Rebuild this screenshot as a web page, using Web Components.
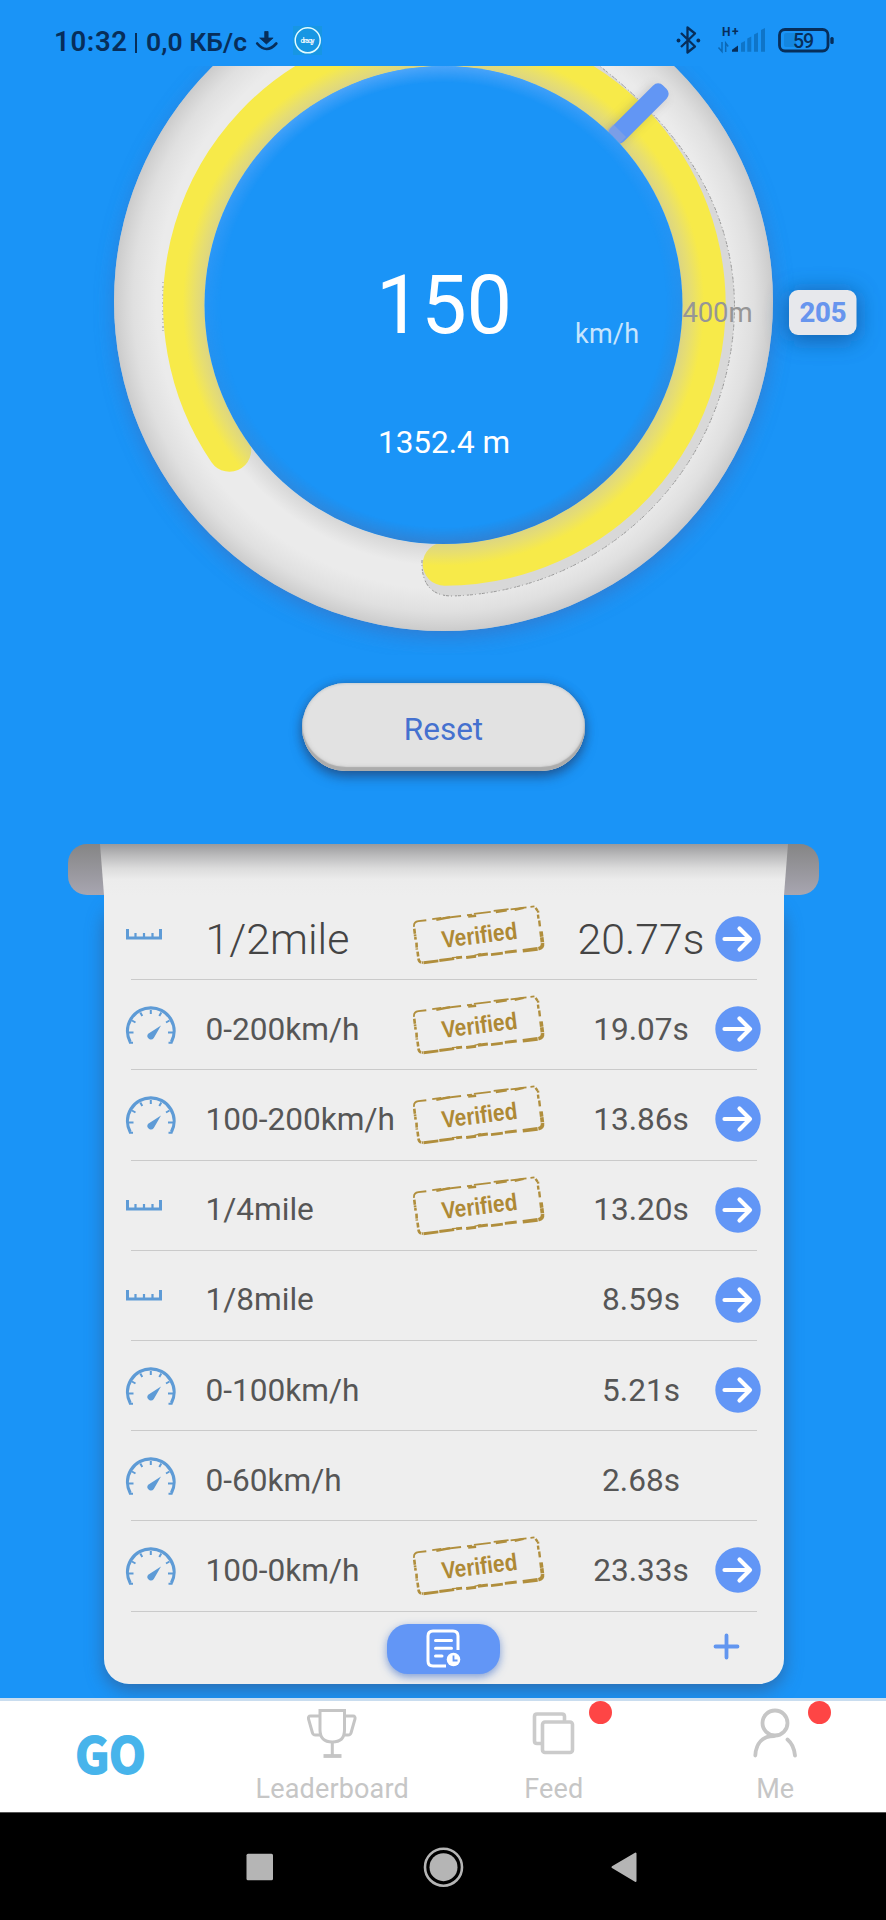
<!DOCTYPE html>
<html lang="en">
<head>
<meta charset="utf-8">
<title>Run results</title>
<style>
body{margin:0;background:#1a94f7;font-family:Roboto,"Liberation Sans",sans-serif}
</style>
</head>
<body>
<drag-app></drag-app>
<script>
const define = (name, html) => customElements.define(name, class extends HTMLElement {
  constructor(){
    super();
    const t = document.createElement('template');
    t.innerHTML = typeof html === 'function' ? html(this) : html;
    this.attachShadow({mode:'open'}).appendChild(t.content.cloneNode(true));
  }
});

define('status-bar', `
<style>
:host{display:flex;height:66px;box-sizing:border-box;background:#1a94f7;position:relative;z-index:2;color:#0a2f58}
svg{display:block}
</style>
<svg width="886" height="66" viewBox="0 0 886 66" font-family="Roboto,sans-serif" fill="#072e5a">
  <text x="54" y="50.5" font-size="27.5" font-weight="600" textLength="73">10:32</text>
  <rect x="135" y="33" width="2" height="20"/>
  <text x="146" y="50.5" font-size="26.5" font-weight="600" textLength="101">0,0 КБ/с</text>
  <path d="M264.7 31.5h3.4v6.5h5l-6.7 6-6.7-6h5z" stroke="#072e5a" stroke-width=".8" stroke-linejoin="round"/>
  <path d="M257.200 43.500Q266.500 54.500 276.300 43.500" fill="none" stroke="#072e5a" stroke-width="2.700" stroke-linecap="round"/>
  <rect x="293" y="26" width="29" height="29" fill="#1796e3"/>
  <circle cx="307.700" cy="40.300" r="12.500" fill="none" stroke="#e3fbff" stroke-width="1.500"/>
  <text x="300.500" y="42.500" font-size="7" font-weight="500" fill="#fff" textLength="14">draqy</text>
  <path d="M681 33l14 13.500-7.500 6v-25l7.500 6-14 13.500" fill="none" stroke="#072e5a" stroke-width="2.300" stroke-linejoin="round"/>
  <circle cx="678.500" cy="40.500" r="1.900"/><circle cx="698.300" cy="40.500" r="1.900"/>
  <text x="722" y="36" font-size="12" font-weight="700" textLength="16.500">H+</text>
  <path d="M722 42v9.500l-3.500-4M725.700 52v-9l2.500 3.500" fill="none" stroke="#0c68b5" stroke-width="1.500"/>
  <path d="M732 51.700v-2l6-4.200v6.200z"/>
  <g fill="#0f75c8"><path d="M741 43l4-2v10.700h-4zM747.300 38.500l4-2v15.200h-4zM754 34.500l4-2v19.200h-4zM761 30l4-2v23.700h-4z"/></g>
  <rect x="784" y="33" width="12" height="14" rx="2" fill="#1486df"/>
  <rect x="779.500" y="29.500" width="48.500" height="21.500" rx="5.500" fill="none" stroke="#072e5a" stroke-width="2.800"/>
  <rect x="830.300" y="37" width="3.400" height="7" rx="1.500"/>
  <text x="793" y="47.500" font-size="19.500" font-weight="500" textLength="21">59</text>
</svg>`);

define('speed-gauge', `
<style>:host{display:block;height:589px}svg{display:block}</style>
<svg width="886" height="589" viewBox="0 66 886 589" font-family="Roboto,sans-serif">
  <defs>
    <radialGradient id="rim" gradientUnits="userSpaceOnUse" cx="443.500" cy="301.500" r="330">
      <stop offset=".87" stop-color="#bbb" stop-opacity="0"/><stop offset=".94" stop-color="#b8b8b8" stop-opacity=".22"/><stop offset="1" stop-color="#b0b0b0" stop-opacity=".55"/>
    </radialGradient>
    <radialGradient id="lip" gradientUnits="userSpaceOnUse" cx="443.500" cy="305" r="330">
      <stop offset=".724" stop-color="#bfbfbf" stop-opacity=".48"/><stop offset=".75" stop-color="#c4c4c4" stop-opacity=".32"/><stop offset=".79" stop-color="#c8c8c8" stop-opacity="0"/>
    </radialGradient>
    <radialGradient id="hole" gradientUnits="userSpaceOnUse" cx="443.500" cy="305" r="239">
      <stop offset=".93" stop-color="#fff" stop-opacity="0"/><stop offset="1" stop-color="#fff" stop-opacity=".7"/>
    </radialGradient>
    <linearGradient id="tone" x1=".4" y1="0" x2=".6" y2="1">
      <stop offset="0" stop-color="#64adfb"/><stop offset=".4" stop-color="#4098f4" stop-opacity=".4"/><stop offset=".6" stop-color="#4b83c7" stop-opacity=".3"/><stop offset="1" stop-color="#3879c4"/>
    </linearGradient>
    <mask id="edge"><circle cx="443.500" cy="305" r="239" fill="url(#hole)"/></mask>
    <filter id="soft" x="-20%" y="-20%" width="140%" height="140%"><feGaussianBlur stdDeviation="11"/></filter>
    <filter id="thin" filterUnits="userSpaceOnUse" x="560" y="60" width="326" height="330"><feGaussianBlur stdDeviation="5"/></filter>
    <filter id="wide" filterUnits="userSpaceOnUse" x="740" y="240" width="146" height="160"><feGaussianBlur stdDeviation="11"/></filter>
    <clipPath id="ring"><path clip-rule="evenodd" d="M114 301.500a329.500 329.500 0 1 0 659 0a329.500 329.500 0 1 0-659 0M204.500 305a239 239 0 1 0 478 0a239 239 0 1 0-478 0"/></clipPath>
  </defs>
  <circle cx="444" cy="308" r="327" fill="#3c70bd" opacity=".75" filter="url(#soft)"/>
  <circle cx="443.500" cy="301.500" r="329.500" fill="#ebebeb"/>
  <circle cx="443.500" cy="301.500" r="329.500" fill="url(#rim)"/>
  <g clip-path="url(#ring)">
    <path d="M422 560C421 582 430 596 452 596A291 291 0 0 0 734.500 305Q733 168 597 64L560 64L450 560Z" fill="#d8d8d8"/>
    <path d="M422 560C421 582 430 596 452 596A291 291 0 0 0 734.500 305Q733 168 597 64" fill="none" stroke="#8f8f8f" stroke-width=".9" stroke-dasharray="3 2 1 3 2 1"/>
    <path d="M163 282v50" stroke="#999" stroke-width="1" stroke-dasharray="1 3 2 2"/>
    <path d="M444.500 564A259.500 259.500 0 1 0 229.500 450" fill="none" stroke="#f7ea49" stroke-width="43.500" stroke-linecap="round"/>
    <circle cx="443.500" cy="305" r="285" fill="url(#lip)"/>
    <path d="M606 144L660 91" stroke="#777" stroke-width="20" opacity=".3" filter="url(#thin)"/>
    <rect x="-33" y="-9.500" width="74.500" height="19" rx="7" fill="#6296f4" transform="translate(635.500 116.500)rotate(-45)"/>
    <path d="M606 131L619 144L626 137L613 124Z" fill="#9aa9d6" opacity=".45"/>
  </g>
  <circle cx="443.500" cy="305" r="239" fill="#1a94f7"/>
  <circle cx="443.500" cy="305" r="239" fill="url(#tone)" mask="url(#edge)"/>
  <text x="376" y="332.500" font-size="81" fill="#fff" textLength="136">150</text>
  <text x="575" y="342.500" font-size="27" fill="#c7e5fd" textLength="64">km/h</text>
  <text x="378" y="453" font-size="31.500" fill="#fff" textLength="132">1352.4 m</text>
  <text x="682.500" y="322" font-size="27.500" fill="#969696" textLength="70">400m</text>
  <rect x="787" y="291" width="71" height="50" rx="10" fill="#174f91" opacity=".7" filter="url(#wide)"/>
  <rect x="789" y="290" width="67.500" height="45" rx="9" fill="#e7e8ec"/>
  <text x="799.500" y="322" font-size="27.500" font-weight="800" fill="#6795ee" textLength="47">205</text>
</svg>`);

define('reset-button', `
<style>
:host{display:flex;align-items:center;justify-content:center;width:283px;height:88px;box-sizing:border-box;padding-top:4px;border-radius:44px;background:#e2e2e2;color:#4571cf;font-size:31.5px;
box-shadow:inset 0 -4px 1px #acacac,inset 0 -3px 5px #bbb,inset 0 1px 2px #c9d2d8,0 6px 12px rgba(32,66,115,.65),0 0 10px rgba(42,84,140,.45)}
</style><slot></slot>`);

const icons = {
  ruler:`<svg width="52" height="44" viewBox="0 0 52 44"><path d="M2.500 12v9h33v-9" fill="none" stroke="#5e9bd6" stroke-width="3"/><path d="M10.500 16v4M19 16v4M27.500 16v4" stroke="#5e9bd6" stroke-width="2.200"/></svg>`,
  meter:`<svg width="52" height="44" viewBox="0 0 52 44" fill="none" stroke="#5e9bd6"><path d="M5.200 35.500A23.300 23.300 0 1 1 46.400 35.500" stroke-width="3.200" transform="translate(0 -.5)"/><path d="M4 35.700h4M43.500 35.700h4" stroke-width="2"/><path d="M25.800 3v4M15.300 5.500l2 3.500M36.300 5.500l-2 3.500M7 13.500l3.500 2M44.500 13.500l-3.500 2M3 25.500h5.500M43 25.500h5.500" stroke-width="2"/><path d="M36 18.500L23.200 26.700A3.400 3.400 0 1 0 28.800 31Z" fill="#5e9bd6" stroke="none"/></svg>`
};

define('verified-stamp', `
<style>:host{display:block;width:134px;height:64px}svg{display:block}</style>
<svg width="134" height="64" viewBox="0 0 134 64">
 <g transform="translate(66.500 32) rotate(-7)" fill="none" stroke="#b08e3c">
  <path d="M-63-16q0-5 5-5h8M-44-21.500h9M-33-21h18M-9-21h5M-2-21.500h17M18-22h15M35-21.500h16M55-21.500h4" stroke-width="1.800"/>
  <path d="M-40-20.300l14-.9M-8-19.600l8 .2M20-20.700l11-.3M39-20.600l9-.8" stroke-width="2.400"/>
  <path d="M-63-14v11M-62.500 0l-.5 7M-62.500 9v5M-62.500 16q0 4.500 4 4.500" stroke-width="2.600" stroke-dasharray="5 .7 2 .6"/>
  <path d="M-58 20.800h15M-42 20.500h15M-25 20h6M-15 20.800h10M-3 20h10M10 21h12M24 20.500h12" stroke-width="2.900"/>
  <path d="M-29 19.200l8 .5M-7 20l7-1.300" stroke-width="1.300"/>
  <path d="M42 21h15q5.500 0 5.500-5v-12" stroke-width="3.600" stroke-dasharray="15 .6 8 .7 5 .6"/>
  <path d="M62-1v-6M61.500-9v-4M62-15v-2M60-20l1.500 3" stroke-width="2.400"/>
 </g>
 <text transform="translate(66 32) rotate(-7)" x="-36.500" y="8.500" font-family="Liberation Sans,Arial,sans-serif" font-weight="700" font-size="24" fill="#ae8935" textLength="76" lengthAdjust="spacingAndGlyphs">Verified</text>
</svg>`);

define('result-row', el => `
<style>
:host{display:grid;grid-template-columns:80.5px 204.5px 134px 95px 74px;height:90.2px;box-sizing:border-box;padding:8px 0 0 21px;align-items:center;position:relative;color:#565656;font-size:31.6px;white-space:nowrap}
:host::after{content:"";position:absolute;left:27px;width:626px;bottom:0;height:1px;background:#cacaca}
:host([lead]){font-size:42.8px;font-weight:300;color:#444}
.time{width:200px;margin-left:-3px;text-align:center}
.stamp{margin:-8px 0 0 1.5px}
.go{margin-left:76px}
svg{display:block;overflow:visible}
</style>
<div>${icons[el.getAttribute('icon')]}</div>
<div><slot></slot></div>
<div class="stamp">${el.hasAttribute('verified') ? '<verified-stamp></verified-stamp>' : ''}</div>
<div class="time">${el.getAttribute('time')}</div>
<div class="go">${el.hasAttribute('open') ? '<svg width="46" height="46" viewBox="0 0 46 46"><circle cx="23" cy="23" r="22.700" fill="#6296f6"/><path d="M9.500 23h25M24.500 12.500L35 23 24.500 33.500" fill="none" stroke="#fff" stroke-width="4.200" stroke-linecap="round" stroke-linejoin="round"/></svg>' : ''}</div>
`);

define('result-sheet', `
<style>
:host{display:grid;width:751px;height:840px;grid-template-rows:840px}
.roll,.paper,.cast{grid-area:1/1}
.roll{height:51px;border-radius:19px;background:linear-gradient(#858585,#a8a6b1)}
.paper{position:relative;width:680px;margin-left:36px;box-sizing:border-box;padding-top:46px;background:linear-gradient(#eee,#eee) 0 51px no-repeat;border-radius:0 0 25px 25px}
.shade{position:absolute;left:-4px;top:0;width:688px;height:51px;background:linear-gradient(#9a9a9c,#bdbdbe 24%,#dcdcdc 48%,#ececec 70%,#eee);clip-path:polygon(0 0,100% 0,684px 100%,4px 100%)}
.cast{align-self:end;margin-left:36px;width:680px;height:785px;border-radius:25px;box-shadow:0 6px 17px rgba(53,88,135,.65)}
.foot{display:grid;grid-template-columns:1fr 1fr 1fr;height:72px;align-items:center}
.history{grid-column:2;justify-self:center;display:grid;place-items:center;width:113px;height:50px;margin-top:3px;border-radius:21px;background:#6296f6;box-shadow:0 3px 9px rgba(79,122,205,.7)}
.add{justify-self:end;margin:-2px 44px 0 0}
svg{display:block}
</style>
<div class="cast"></div><div class="roll"></div>
<div class="paper"><div class="shade"></div><slot></slot>
 <div class="foot"><div class="history"><svg width="36" height="40" viewBox="0 0 36 40" fill="none" stroke="#fff"><path d="M32 21V7q0-5-5-5H7Q2 2 2 7v25q0 5 5 5h13" stroke-width="3"/><path d="M9.500 11.500h16M9.500 19.300h16M9.500 27h6.500" stroke-width="3" stroke-linecap="round"/><circle cx="27.500" cy="30.500" r="6.800" fill="#fff" stroke="none"/><path d="M27.500 26.500v5h4" stroke="#6296f6" stroke-width="1.800"/></svg></div>
 <svg class="add" width="27" height="27" viewBox="0 0 27 27"><path d="M13.500 2.500v22M2.500 13.500h22" stroke="#6296ef" stroke-width="3.800" stroke-linecap="round"/></svg></div>
</div>`);

define('tab-item', `
<style>
:host{display:flex;flex-direction:column;align-items:center;position:relative;box-sizing:border-box;height:111px;padding-top:5px;color:#c6c6c6;font-size:27px}
:host([badge])::after{content:"";position:absolute;left:calc(50% + var(--badge-shift,35.3px));top:0;width:23px;height:23px;border-radius:50%;background:#fe4545}
.l{line-height:32px;margin-top:13px;letter-spacing:.15px}
</style><slot name="icon"></slot><div class="l"><slot></slot></div>`);

define('tab-bar', `
<style>
:host{display:grid;grid-template-columns:repeat(4,221.5px);height:115px;box-sizing:border-box;background:#fff;border-top:3px solid #c9ddef;position:relative;border-bottom:1px solid #555}
svg{display:block}
.me{--badge-shift:33px}
</style>
<svg width="221" height="110" viewBox="0 0 221 110"><text x="75.500" y="72.300" font-family="Noto Sans CJK SC,Noto Sans,sans-serif" font-weight="700" font-size="48.500" fill="#47b4eb" stroke="#47b4eb" stroke-width="2" textLength="70" lengthAdjust="spacingAndGlyphs">GO</text></svg>
<tab-item><svg slot="icon" width="52" height="54" viewBox="0 0 52 54" fill="none" stroke="#c5c5c5" stroke-width="3"><path d="M14 4.500h24.500V24q0 12-12.200 12T14 24z"/><path d="M14 10H4.500Q2 10 2.500 13l4 14q.5 2 3 2H14M38.500 10h8.500q2.500 0 2 3l-4 14q-.5 2-3 2h-3.500M26.300 36v14"/><path d="M17.500 50h18" stroke-width="3.800"/></svg>Leaderboard</tab-item>
<tab-item badge><svg slot="icon" width="52" height="54" viewBox="0 0 52 54" fill="none" stroke="#cbcbcb" stroke-width="3.600"><path d="M13 37.500H9Q6.500 37.500 6.500 35V10.500Q6.500 8 9 8h25q2.500 0 2.500 2.500V15"/><rect x="14.500" y="16" width="30" height="30.500" rx="2.500"/></svg>Feed</tab-item>
<tab-item badge class="me"><svg slot="icon" width="52" height="54" viewBox="0 0 52 54" fill="none" stroke="#c6c6c6" stroke-width="3.800" stroke-linecap="round"><circle cx="26" cy="17" r="12.500"/><path d="M6.300 49.500C7 37 14 30 25 30M38.500 33.500Q45 39 46 49.500"/></svg>Me</tab-item>`);

define('nav-bar', `
<style>:host{display:flex;justify-content:space-between;box-sizing:border-box;width:886px;padding:0 239px 0 236.500px;height:107px;background:#000;align-items:center}svg{display:block}</style>
<svg width="44" height="44" viewBox="0 0 44 44"><rect x="9.500" y="8.700" width="26.500" height="26.500" rx="1.500" fill="#b5b5b5"/></svg>
<svg width="44" height="44" viewBox="0 0 44 44"><circle cx="23.500" cy="22.200" r="18.500" fill="none" stroke="#b5b5b5" stroke-width="2.600"/><circle cx="23.500" cy="22.200" r="14" fill="#b5b5b5"/></svg>
<svg width="44" height="44" viewBox="0 0 44 44"><path d="M9.500 22.200L32.500 8.500v27.500z" fill="#b5b5b5" stroke="#b5b5b5" stroke-width="2" stroke-linejoin="round"/></svg>`);

define('drag-app', `
<style>
:host{display:flex;flex-direction:column;width:886px;height:1920px;background:#1a94f7;overflow:hidden}
main{flex:none;height:1632px;display:flex;flex-direction:column;align-items:center;overflow:hidden}
reset-button{margin-top:28px;margin-left:1px;flex:none}
result-sheet{margin-top:73px;margin-left:1px;flex:none}
speed-gauge,tab-bar,nav-bar{flex:none}
</style>
<status-bar></status-bar>
<main>
<speed-gauge></speed-gauge>
<reset-button>Reset</reset-button>
<result-sheet>
<result-row icon="ruler" lead verified open time="20.77s">1/2mile</result-row>
<result-row icon="meter" verified open time="19.07s">0-200km/h</result-row>
<result-row icon="meter" verified open time="13.86s">100-200km/h</result-row>
<result-row icon="ruler" verified open time="13.20s">1/4mile</result-row>
<result-row icon="ruler" open time="8.59s">1/8mile</result-row>
<result-row icon="meter" open time="5.21s">0-100km/h</result-row>
<result-row icon="meter" time="2.68s">0-60km/h</result-row>
<result-row icon="meter" verified open time="23.33s">100-0km/h</result-row>
</result-sheet>
</main>
<tab-bar></tab-bar>
<nav-bar></nav-bar>`);
</script>
</body>
</html>
